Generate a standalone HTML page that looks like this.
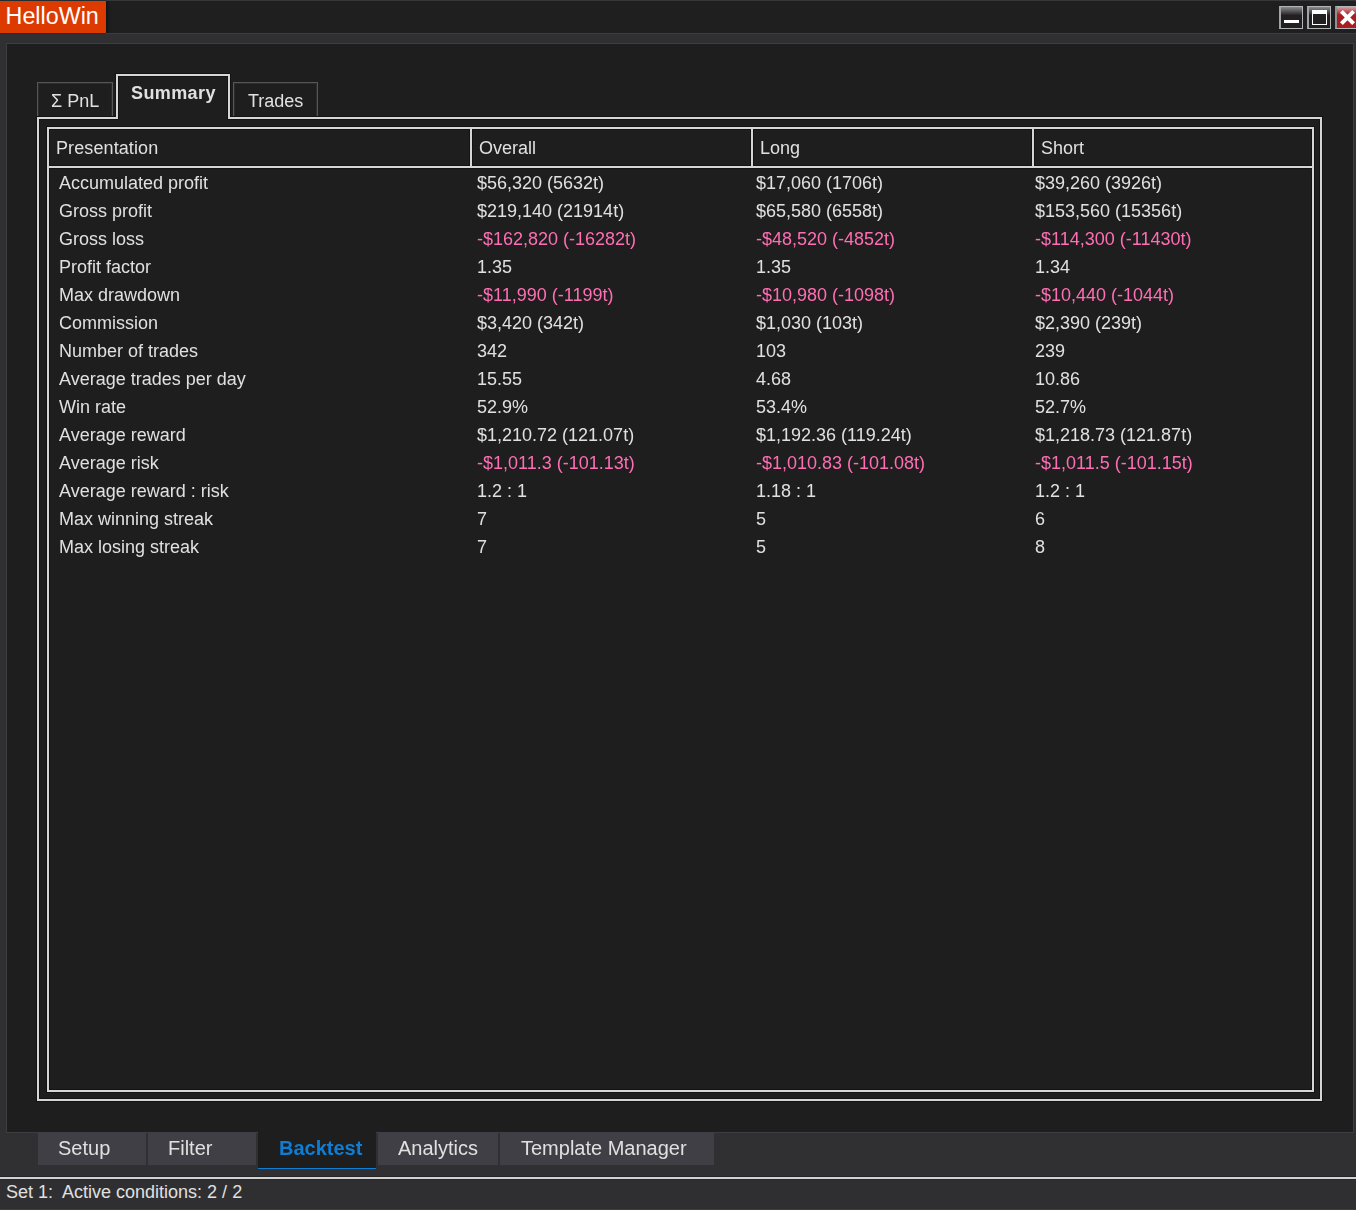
<!DOCTYPE html>
<html><head><meta charset="utf-8">
<style>
*{margin:0;padding:0;box-sizing:border-box}
html,body{width:1356px;height:1210px;overflow:hidden;background:#303032;font-family:"Liberation Sans",sans-serif;color:#e0e0e0}
.a{position:absolute}
.t{position:absolute;white-space:pre;font-size:18px;line-height:20px}
#titlebar{left:0;top:0;width:1356px;height:34px;background:#1f1f1f;border-top:1px solid #37373a;border-bottom:1px solid #3c3c40}
#logo{left:0;top:1px;width:106px;height:32px;background:#dd3a00}
#content{left:6px;top:43px;width:1348px;height:1090px;background:#1e1e1e;border:1px solid #3e3d42}
.tab{position:absolute;border:1px solid #565656;border-bottom:none;box-shadow:inset 1px 1px 0 #2c2c2c,inset -1px 0 0 #2c2c2c}
.row{position:absolute;left:0;top:0;width:1356px;height:20px;white-space:pre;font-size:18px;line-height:20px}
.gs{will-change:transform}
.row span{position:absolute;top:0}
.c0{left:59px}.c1{left:477px}.c2{left:756px}.c3{left:1035px}
.neg{color:#ff6eb4}
.btab{position:absolute;top:1132px;height:33px;font-size:20px;line-height:20px;white-space:pre}
.btab span{position:absolute;top:6px}
.wbtn{position:absolute;top:6px;width:24px;height:23px;border:1px solid #b2b4b8;border-left:2px solid #a0a4a8;background:linear-gradient(#8a8a8c,#231f20 40%)}
</style></head>
<body>
<div id="titlebar" class="a"></div>
<div class="a" style="left:0;top:0;width:106px;height:34px;background:#262b30"></div>
<div id="logo" class="a"></div>
<div class="a" style="left:106px;top:1px;width:5px;height:32px;background:linear-gradient(90deg,#0f1418,#1f1f1f)"></div>
<div class="t" style="left:5.6px;top:4px;font-size:23.3px;line-height:24px;color:#fff">HelloWin</div>

<!-- window buttons -->
<div class="wbtn" style="left:1279px"></div>
<div class="a" style="left:1284px;top:20px;width:15px;height:3px;background:#fff"></div>
<div class="wbtn" style="left:1307px"></div>
<div class="a" style="left:1312px;top:10px;width:15px;height:15px;border:1px solid #fff;border-top-width:4px;background:#231f20"></div>
<div class="a" style="left:1335px;top:6px;width:21px;height:23px;border:1px solid #b2b6ba;border-left:2px solid #8a9094;border-right:none;background:linear-gradient(#d8a0a4,#a81c22 38%)"></div>
<svg class="a" style="left:1338px;top:8px" width="19" height="19" viewBox="0 0 19 19"><path d="M3.4 3.4 L15.6 15.6 M15.6 3.4 L3.4 15.6" stroke="#fff" stroke-width="4"/></svg>

<div id="content" class="a"></div>

<!-- top tabs -->
<div class="tab" style="left:37px;top:82px;width:76px;height:35px"></div>
<div class="t gs" style="left:51px;top:91px">Σ PnL</div>
<div class="tab" style="left:233px;top:82px;width:85px;height:35px"></div>
<div class="t gs" style="left:248px;top:91px">Trades</div>
<div class="t gs" style="left:131px;top:83px;font-weight:bold;letter-spacing:0.4px">Summary</div>

<div class="a" style="left:115px;top:73px;width:4px;height:47px;background:#131313"></div>
<div class="a" style="left:115px;top:73px;width:116px;height:4px;background:#131313"></div>
<div class="a" style="left:227px;top:73px;width:4px;height:47px;background:#131313"></div>
<div class="a" style="left:36px;top:116px;width:83px;height:4px;background:#131313"></div>
<div class="a" style="left:227px;top:116px;width:1096px;height:4px;background:#131313"></div>
<div class="a" style="left:36px;top:116px;width:4px;height:986px;background:#131313"></div>
<div class="a" style="left:1319px;top:116px;width:4px;height:986px;background:#131313"></div>
<div class="a" style="left:36px;top:1098px;width:1287px;height:4px;background:#131313"></div>
<div class="a" style="left:46px;top:126px;width:1269px;height:4px;background:#131313"></div>
<div class="a" style="left:46px;top:126px;width:4px;height:967px;background:#131313"></div>
<div class="a" style="left:1311px;top:126px;width:4px;height:967px;background:#131313"></div>
<div class="a" style="left:46px;top:1089px;width:1269px;height:4px;background:#131313"></div>
<div class="a" style="left:46px;top:165px;width:1269px;height:4px;background:#131313"></div>
<div class="a" style="left:469px;top:126px;width:4px;height:43px;background:#131313"></div>
<div class="a" style="left:750px;top:126px;width:4px;height:43px;background:#131313"></div>
<div class="a" style="left:1031px;top:126px;width:4px;height:43px;background:#131313"></div>
<div class="a" style="left:116px;top:74px;width:2px;height:45px;background:#d6d6d6"></div>
<div class="a" style="left:116px;top:74px;width:114px;height:2px;background:#d6d6d6"></div>
<div class="a" style="left:228px;top:74px;width:2px;height:45px;background:#d6d6d6"></div>
<div class="a" style="left:37px;top:117px;width:81px;height:2px;background:#d6d6d6"></div>
<div class="a" style="left:228px;top:117px;width:1094px;height:2px;background:#d6d6d6"></div>
<div class="a" style="left:37px;top:117px;width:2px;height:984px;background:#d6d6d6"></div>
<div class="a" style="left:1320px;top:117px;width:2px;height:984px;background:#d6d6d6"></div>
<div class="a" style="left:37px;top:1099px;width:1285px;height:2px;background:#d6d6d6"></div>
<div class="a" style="left:47px;top:127px;width:1267px;height:2px;background:#d6d6d6"></div>
<div class="a" style="left:47px;top:127px;width:2px;height:965px;background:#d6d6d6"></div>
<div class="a" style="left:1312px;top:127px;width:2px;height:965px;background:#d6d6d6"></div>
<div class="a" style="left:47px;top:1090px;width:1267px;height:2px;background:#d6d6d6"></div>
<div class="a" style="left:47px;top:166px;width:1267px;height:2px;background:#d6d6d6"></div>
<div class="a" style="left:470px;top:127px;width:2px;height:41px;background:#d6d6d6"></div>
<div class="a" style="left:751px;top:127px;width:2px;height:41px;background:#d6d6d6"></div>
<div class="a" style="left:1032px;top:127px;width:2px;height:41px;background:#d6d6d6"></div>

<div class="row" style="top:138px"><span style="left:56px;letter-spacing:0.1px">Presentation</span><span style="left:479px">Overall</span><span style="left:760px">Long</span><span style="left:1041px">Short</span></div>
<div class="row gs" style="top:173px"><span class="c0">Accumulated profit</span><span class="c1">$56,320 (5632t)</span><span class="c2">$17,060 (1706t)</span><span class="c3">$39,260 (3926t)</span></div>
<div class="row gs" style="top:201px"><span class="c0">Gross profit</span><span class="c1">$219,140 (21914t)</span><span class="c2">$65,580 (6558t)</span><span class="c3">$153,560 (15356t)</span></div>
<div class="row gs" style="top:229px"><span class="c0">Gross loss</span><span class="c1 neg">-$162,820 (-16282t)</span><span class="c2 neg">-$48,520 (-4852t)</span><span class="c3 neg">-$114,300 (-11430t)</span></div>
<div class="row gs" style="top:257px"><span class="c0">Profit factor</span><span class="c1">1.35</span><span class="c2">1.35</span><span class="c3">1.34</span></div>
<div class="row gs" style="top:285px"><span class="c0">Max drawdown</span><span class="c1 neg">-$11,990 (-1199t)</span><span class="c2 neg">-$10,980 (-1098t)</span><span class="c3 neg">-$10,440 (-1044t)</span></div>
<div class="row gs" style="top:313px"><span class="c0">Commission</span><span class="c1">$3,420 (342t)</span><span class="c2">$1,030 (103t)</span><span class="c3">$2,390 (239t)</span></div>
<div class="row gs" style="top:341px"><span class="c0">Number of trades</span><span class="c1">342</span><span class="c2">103</span><span class="c3">239</span></div>
<div class="row gs" style="top:369px"><span class="c0">Average trades per day</span><span class="c1">15.55</span><span class="c2">4.68</span><span class="c3">10.86</span></div>
<div class="row gs" style="top:397px"><span class="c0">Win rate</span><span class="c1">52.9%</span><span class="c2">53.4%</span><span class="c3">52.7%</span></div>
<div class="row gs" style="top:425px"><span class="c0">Average reward</span><span class="c1">$1,210.72 (121.07t)</span><span class="c2">$1,192.36 (119.24t)</span><span class="c3">$1,218.73 (121.87t)</span></div>
<div class="row gs" style="top:453px"><span class="c0">Average risk</span><span class="c1 neg">-$1,011.3 (-101.13t)</span><span class="c2 neg">-$1,010.83 (-101.08t)</span><span class="c3 neg">-$1,011.5 (-101.15t)</span></div>
<div class="row gs" style="top:481px"><span class="c0">Average reward : risk</span><span class="c1">1.2 : 1</span><span class="c2">1.18 : 1</span><span class="c3">1.2 : 1</span></div>
<div class="row gs" style="top:509px"><span class="c0">Max winning streak</span><span class="c1">7</span><span class="c2">5</span><span class="c3">6</span></div>
<div class="row gs" style="top:537px"><span class="c0">Max losing streak</span><span class="c1">7</span><span class="c2">5</span><span class="c3">8</span></div>

<!-- bottom tabs -->
<div class="a" style="left:38px;top:1132px;width:676px;height:33px;background:#403f45"></div>
<div class="a" style="left:146px;top:1133px;width:2px;height:32px;background:#303032"></div>
<div class="a" style="left:256px;top:1133px;width:2px;height:32px;background:#303032"></div>
<div class="a" style="left:376px;top:1133px;width:2px;height:32px;background:#303032"></div>
<div class="a" style="left:498px;top:1133px;width:2px;height:32px;background:#303032"></div>
<div class="a" style="left:258px;top:1132px;width:118px;height:36px;background:#1e1e1e"></div>
<div class="a" style="left:258px;top:1168px;width:118px;height:1px;background:#0f7dd3"></div>
<div class="btab gs" style="left:38px;width:108px"><span style="left:20px">Setup</span></div>
<div class="btab gs" style="left:148px;width:108px"><span style="left:20px">Filter</span></div>
<div class="btab gs" style="left:258px;width:118px;color:#0f7dd3;font-weight:bold"><span style="left:21px">Backtest</span></div>
<div class="btab gs" style="left:378px;width:120px"><span style="left:20px">Analytics</span></div>
<div class="btab gs" style="left:500px;width:213px"><span style="left:21px">Template Manager</span></div>

<!-- status -->
<div class="a" style="left:0;top:1176px;width:1356px;height:1px;background:#252527"></div>
<div class="a" style="left:0;top:1177px;width:1356px;height:2px;background:#d2d2d2"></div>
<div class="a" style="left:0;top:1179px;width:1356px;height:31px;background:#2f2f31;border-top:1px solid #29292b;border-bottom:1px solid #3d3c42"></div>
<div class="t" style="left:6px;top:1182px">Set 1:  Active conditions: 2 / 2</div>
</body></html>
